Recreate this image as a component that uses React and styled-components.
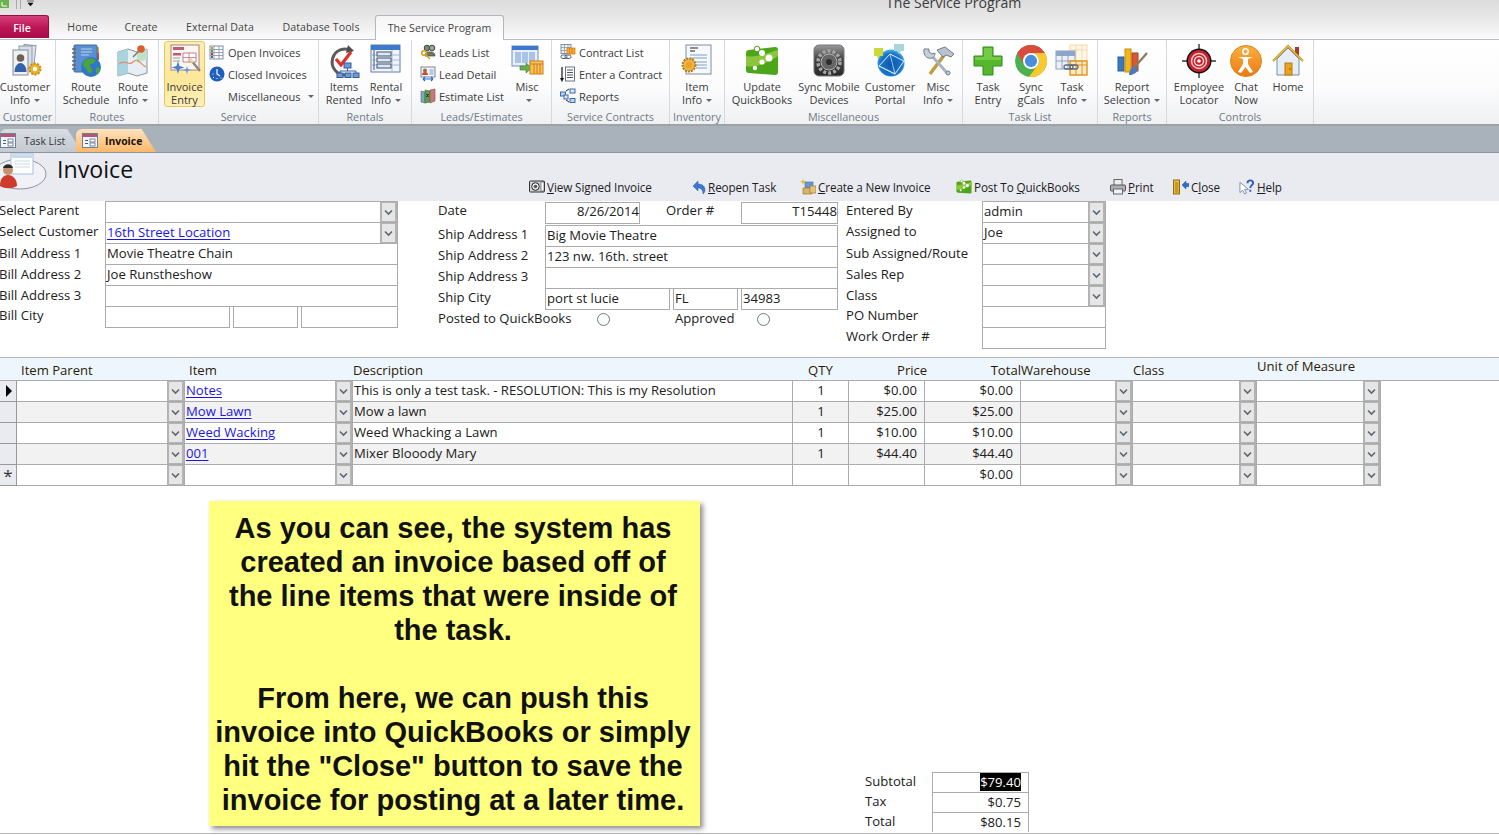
import React from "react";
import styled, { createGlobalStyle } from "styled-components";

const uiFont = `"Open Sans", "Noto Sans", sans-serif`;
const line = "#ababab";

const GlobalStyle = createGlobalStyle`
  html, body {
    margin: 0;
    padding: 0;
    background: #fff;
  }
  body {
    font-family: ${uiFont};
    color: #1c1c1c;
    overflow: hidden;
  }
`;

const Page = styled.div`
  width: 1499px;
  height: 835px;
  overflow: hidden;
  display: flex;
  flex-direction: column;
`;

const Chrome = styled.div`
  height: 40px;
  background: linear-gradient(#dcdcdc, #e6e6e6 40%, #fbfbfb);
  border-bottom: 1px solid #b9bcc2;
  box-sizing: border-box;
  display: flex;
  flex-direction: column;
`;

const TitleBar = styled.div`
  height: 16px;
  display: flex;
  overflow: hidden;
`;

const Quick = styled.div`
  width: 886px;
  flex: none;
  display: flex;
  align-items: flex-start;
  svg {
    display: block;
  }
`;

const Title = styled.div`
  font-size: 14.1px;
  line-height: 16px;
  margin-top: -5px;
  color: #3c3c3c;
  white-space: nowrap;
`;

const Tabs = styled.div`
  display: flex;
  height: 24px;
`;

const FileTab = styled.div`
  width: 49px;
  height: 23px;
  margin-right: 6px;
  padding-right: 4px;
  background: linear-gradient(#d6417a, #bb1454 55%, #a80d48);
  border: 1px solid #9c0b42;
  border-bottom: 0;
  border-left: 0;
  border-radius: 0 3px 0 0;
  box-sizing: border-box;
  color: #fff;
  font-size: 10.5px;
  font-weight: 600;
  line-height: 24px;
  text-align: center;
`;

const Tab = styled.div`
  width: ${({ $w }) => $w}px;
  margin-left: ${({ $ml }) => $ml || 0}px;
  height: ${({ $active }) => ($active ? 25 : 24)}px;
  box-sizing: border-box;
  font-size: 10.6px;
  line-height: 24px;
  color: #444;
  text-align: center;
  white-space: nowrap;
  letter-spacing: 0.1px;
  ${({ $active }) =>
    $active &&
    `background: linear-gradient(#f4f4f4, #ffffff);
     border: 1px solid #b4b7bd;
     border-bottom: 0;
     border-radius: 3px 3px 0 0;
     position: relative;
     z-index: 1;`}
`;

const Ribbon = styled.div`
  height: 86px;
  display: flex;
  background: linear-gradient(#ffffff, #fcfcfd 55%, #eef0f2);
  border-bottom: 2px solid #9ea3a8;
  box-sizing: border-box;
`;

const Group = styled.div`
  width: ${({ $w }) => $w}px;
  flex: none;
  box-sizing: border-box;
  border-right: 1px solid #d5d8dc;
  display: flex;
  flex-direction: column;
`;

const GroupBody = styled.div`
  height: 70px;
  padding-left: ${({ $pl }) => $pl || 0}px;
  display: flex;
`;

const GroupLabel = styled.div`
  text-align: center;
  font-size: 10.8px;
  line-height: 14px;
  color: #6f7a86;
  white-space: nowrap;
`;

const BigButton = styled.div`
  width: ${({ $w }) => $w}px;
  flex: none;
  height: 66px;
  margin-top: 1px;
  box-sizing: border-box;
  display: flex;
  flex-direction: column;
  align-items: center;
  padding-top: 2px;
  font-size: 11px;
  line-height: 13px;
  color: #3b3b3b;
  text-align: center;
  white-space: nowrap;
  border-radius: 3px;
  border: 1px solid transparent;
  ${({ $active }) =>
    $active &&
    `background: linear-gradient(#fdeeb4, #fde79a 60%, #fdf0b8);
     border-color: #e8c558;`}
  svg {
    flex: none;
    display: block;
    margin-bottom: 2px;
  }
`;

const Caret = styled.span`
  display: inline-block;
  width: 0;
  height: 0;
  margin-left: 4px;
  vertical-align: 2px;
  border-left: 3px solid transparent;
  border-right: 3px solid transparent;
  border-top: 3px solid #666;
`;

const SmallList = styled.div`
  width: ${({ $w }) => $w}px;
  flex: none;
  display: flex;
  flex-direction: column;
  padding-top: 1px;
`;

const SmallButton = styled.div`
  height: 22px;
  display: flex;
  align-items: center;
  gap: 3px;
  padding-left: ${({ $pl }) => $pl || 0}px;
  font-size: 11px;
  color: #3b3b3b;
  white-space: nowrap;
  svg {
    flex: none;
  }
`;

const DocStrip = styled.div`
  height: 27px;
  background: #a9b2bb;
  border-bottom: 1px solid #8d949c;
  box-sizing: border-box;
  display: flex;
  align-items: flex-end;
`;

const DocTab = styled.div`
  height: 23px;
  width: ${({ $w }) => $w}px;
  margin-left: ${({ $ml }) => $ml || 0}px;
  box-sizing: border-box;
  display: flex;
  align-items: center;
  gap: ${({ $gap }) => $gap}px;
  padding-left: ${({ $pl }) => $pl}px;
  font-size: 10.4px;
  border-radius: 6px 8px 0 0;
  clip-path: polygon(0 0, 82% 0, 100% 100%, 0 100%);
  background: ${({ $active }) =>
    $active
      ? "linear-gradient(#fde3bf, #fbb869)"
      : "linear-gradient(#d9dde2, #c3c9d0)"};
  font-weight: ${({ $active }) => ($active ? 700 : 400)};
  color: ${({ $active }) => ($active ? "#1c1204" : "#333")};
  svg {
    flex: none;
  }
`;

const FormHeader = styled.div`
  height: 48px;
  background: #e9ebf1;
  display: flex;
`;

const HeaderBadge = styled.div`
  width: 57px;
  flex: none;
  svg {
    display: block;
  }
`;

const HeaderTitle = styled.div`
  width: 472px;
  flex: none;
  font-size: 23.2px;
  line-height: 33px;
  color: #111;
`;

const Commands = styled.div`
  display: flex;
  align-items: flex-start;
  padding-top: 25px;
`;

const Command = styled.div`
  width: ${({ $w }) => $w}px;
  flex: none;
  display: flex;
  align-items: center;
  gap: 2px;
  height: 17px;
  font-size: 11.7px;
  color: #1c1c1c;
  white-space: nowrap;
  letter-spacing: -0.1px;
  svg {
    flex: none;
  }
  u {
    text-underline-offset: 1px;
  }
`;

const Details = styled.div`
  height: 156px;
  display: flex;
  border-bottom: 1px solid #b5b5b5;
  font-size: 13.1px;
`;

const BillColumn = styled.div`
  width: 398px;
  flex: none;
  margin-right: 40px;
`;

const ShipColumn = styled.div`
  width: 400px;
  flex: none;
  margin-right: 8px;
`;

const StaffColumn = styled.div`
  width: 260px;
  flex: none;
`;

const FormRow = styled.div`
  height: ${({ $h }) => $h || 21}px;
  display: flex;
  margin-top: ${({ $mt }) => $mt || 0}px;
`;

const Label = styled.div`
  width: ${({ $w }) => $w}px;
  flex: none;
  margin-left: ${({ $ml }) => $ml || 0}px;
  margin-top: ${({ $dy }) => $dy || 0}px;
  line-height: 19px;
  white-space: nowrap;
  color: #202020;
`;

const Field = styled.div`
  width: ${({ $w }) => $w}px;
  flex: none;
  margin-left: ${({ $ml }) => $ml || 0}px;
  height: 22px;
  box-sizing: border-box;
  border: 1px solid ${line};
  margin-bottom: -1px;
  background: #fff;
  display: flex;
  align-items: flex-start;
  justify-content: space-between;
  padding-left: 1px;
  line-height: 18px;
  white-space: nowrap;
  color: #202020;
`;

const FieldText = styled.span`
  flex: 1;
  text-align: ${({ $right }) => ($right ? "right" : "left")};
  margin-top: ${({ $right }) => ($right ? -1 : 0)}px;
`;

const Link = styled.span`
  color: #1a14e8;
  text-decoration: underline;
  text-underline-offset: 2px;
`;

const ComboButton = styled.div`
  width: 17px;
  align-self: stretch;
  flex: none;
  box-sizing: border-box;
  background: #e6e6e6;
  border: 2px solid #b3b3b3;
  border-top-width: 1px;
  border-bottom-width: 1px;
  display: flex;
  align-items: center;
  justify-content: center;
`;

const RadioRow = styled.div`
  height: 21px;
  display: flex;
  align-items: flex-start;
`;

const Radio = styled.span`
  width: 11px;
  height: 11px;
  flex: none;
  border-radius: 50%;
  border: 1px solid #6d7680;
  margin-left: ${({ $ml }) => $ml}px;
  margin-top: 4px;
`;

const Table = styled.div`
  display: grid;
  grid-template-columns: 17px 168px 168px 440px 56px 76px 96px 112px 124px 124px;
  font-size: 13.1px;
`;

const HeadRow = styled.div`
  grid-column: 1 / -1;
  height: 23px;
  background: #eef6fd;
  border-bottom: 1px solid ${line};
  width: 1499px;
  box-sizing: border-box;
  display: grid;
  grid-template-columns: 21px 168px 164px 455px 89px 92px 32px 112px 124px 124px;
  line-height: 24px;
  color: #2a1a08;
  white-space: nowrap;
`;

const HeadCell = styled.div`
  text-align: ${({ $align }) => $align || "left"};
  margin-top: ${({ $up }) => ($up ? "-4px" : "0")};
  margin-left: ${({ $ml }) => $ml || 0}px;
`;

const Selector = styled.div`
  background: #e9ebf1;
  height: 21px;
  box-sizing: border-box;
  border-bottom: 1px solid #999;
  border-right: 1px solid #999;
  display: flex;
  align-items: center;
  justify-content: ${({ $center }) => ($center ? "center" : "flex-start")};
  padding-left: ${({ $center }) => ($center ? 0 : 6)}px;
  padding-top: ${({ $center }) => ($center ? 1 : 0)}px;
  font-size: 17px;
  color: #333;
`;

const RowArrow = styled.span`
  width: 0;
  height: 0;
  border-top: 6px solid transparent;
  border-bottom: 6px solid transparent;
  border-left: 6px solid #000;
`;

const Cell = styled.div`
  height: 21px;
  box-sizing: border-box;
  background: ${({ $alt }) => ($alt ? "#f2f2f2" : "#fff")};
  border-bottom: 1px solid ${line};
  border-right: 1px solid ${line};
  display: flex;
  align-items: flex-start;
  justify-content: ${({ $justify }) => $justify || "space-between"};
  padding-left: 1px;
  padding-right: ${({ $justify }) => ($justify === "flex-end" ? 7 : 0)}px;
  line-height: 18px;
  white-space: nowrap;
  color: #202020;
`;

const BottomArea = styled.div`
  height: 348px;
  display: flex;
  border-bottom: 1px solid #b5b5b5;
  box-sizing: border-box;
`;

const Note = styled.div`
  width: 491px;
  height: 325px;
  margin: 15px 0 0 209px;
  flex: none;
  box-sizing: border-box;
  padding: 10px 3px 0 0;
  background: #ffff80;
  box-shadow: 3px 3px 5px #8f8f8f;
  font-family: "Liberation Sans", Arial, sans-serif;
  font-weight: 700;
  font-size: 29px;
  line-height: 34px;
  color: #111;
  text-align: center;
  p {
    margin: 0;
  }
`;

const Totals = styled.div`
  margin: 286px 0 0 165px;
  font-size: 13.1px;
`;

const TotalRow = styled.div`
  height: 20px;
  display: flex;
  line-height: 18px;
`;

const TotalLabel = styled.div`
  width: 67px;
  flex: none;
  color: #202020;
`;

const TotalValue = styled.div`
  width: 97px;
  box-sizing: border-box;
  border: 1px solid ${line};
  border-bottom: 0;
  text-align: right;
  padding-right: 7px;
  line-height: 18px;
  color: #202020;
`;

const Selected = styled.span`
  background: #000;
  color: #fff;
`;

// ---- icons ----

const Chevron = () => (
  <svg width="9" height="7" viewBox="0 0 9 7">
    <path d="M1 1.5 L4.5 5 L8 1.5" fill="none" stroke="#5d6670" strokeWidth="1.6" />
  </svg>
);

const QuickIcons = () => (
  <svg width="40" height="12" viewBox="0 0 40 12">
    <rect x="-2" y="-2" width="11" height="10" fill="#6cb14d" />
    <path d="M2 2v4h5" fill="none" stroke="#fff" strokeWidth="1" />
    <path d="M16.5 0v9M20.5 0v9" stroke="#a8a8a8" />
    <path d="M27 1h7M28 3h5l-2.5 3z" fill="#111" stroke="#111" strokeWidth="0.6" />
  </svg>
);

const CustomerIcon = () => (
  <svg width="34" height="34" viewBox="0 0 34 34">
    <rect x="15" y="1" width="12" height="21" fill="#dfe5ee" stroke="#8f99a5" transform="rotate(6 21 11)" />
    <rect x="11" y="2" width="13" height="23" fill="#d7dee8" stroke="#8f99a5" />
    <rect x="5" y="6" width="15" height="25" fill="#eef0f4" stroke="#808b98" />
    <circle cx="12.5" cy="14" r="3.8" fill="#6f5f55" />
    <path d="M6.5 28c0-6 3.5-9 6-9s6 3 6 9z" fill="#3461ab" />
    <circle cx="27" cy="25" r="5.5" fill="#eab52c" stroke="#c88f14" strokeWidth="2" strokeDasharray="2.2 1.2" />
    <circle cx="27" cy="25" r="2.2" fill="#fff" />
  </svg>
);

const RouteScheduleIcon = () => (
  <svg width="34" height="34" viewBox="0 0 34 34">
    <rect x="27" y="3" width="3" height="6" fill="#e0a030" />
    <rect x="27" y="9" width="3" height="7" fill="#c64a3a" />
    <rect x="5" y="1" width="23" height="27" rx="1" fill="#5b8fcf" stroke="#3a6aa8" />
    <path d="M3 5h4M3 9h4M3 13h4M3 17h4M3 21h4M3 25h4" stroke="#666" strokeWidth="1.3" />
    <path d="M12 5h11M12 8h11M12 11h8" stroke="#b8d0ee" strokeWidth="1" />
    <circle cx="22" cy="23" r="10" fill="#2f78c8" />
    <path d="M15 17c3-3 8-3 11-1 1 3-3 4-5 4-1 3 3 4 2 8-3 2-4 1-5-2-1-2-4-3-4-6z" fill="#4ca53a" />
    <path d="M27 24c2-1 3 0 4 1-1 3-3 5-4 5z" fill="#4ca53a" />
  </svg>
);

const RouteInfoIcon = () => (
  <svg width="34" height="34" viewBox="0 0 34 34">
    <path d="M2 8l10-3 9 3 10-3v24l-10 3-9-3-10 3z" fill="#e8eff3" stroke="#7f97a6" />
    <path d="M2 8l10-3v24l-10 3z" fill="#a9d3de" />
    <path d="M21 8l10-3v10l-10 4z" fill="#bfe1c6" />
    <path d="M3 20c6-6 9 3 14-2s7 2 13 5" fill="none" stroke="#e0896a" strokeWidth="1.2" />
    <path d="M17 13l6-6" stroke="#777" strokeWidth="1.4" />
    <circle cx="25" cy="5" r="3.8" fill="#d9602a" />
  </svg>
);

const InvoiceEntryIcon = () => (
  <svg width="34" height="34" viewBox="0 0 34 34">
    <rect x="3" y="1" width="28" height="25" fill="#fbf6f0" stroke="#a08a80" />
    <rect x="5" y="3" width="11" height="3" fill="#c05a7a" />
    <rect x="5" y="9" width="8" height="2.5" fill="#c05a7a" />
    <path d="M15 9h13v9H15z" fill="#fff" stroke="#c05a7a" strokeWidth="0.8" />
    <path d="M15 13.5h13M21 9v9" stroke="#c05a7a" strokeWidth="0.7" />
    <path d="M5 14h7M5 17h7" stroke="#9a9a9a" />
    <path d="M22 15l10 12" stroke="#888" strokeWidth="2.4" />
    <path d="M22 15l3 3.5" stroke="#f4e08a" strokeWidth="2.4" />
    <path d="M10 17l1.5 5 5 1.5-5 1.500-1.500 5-1.500-5-5-1.500 5-1.500z" fill="#4b7fd0" />
    <path d="M19 22l1 3 3 1-3 1-1 3-1-3-3-1 3-1z" fill="#6e9ae0" />
  </svg>
);

const ItemsRentedIcon = () => (
  <svg width="34" height="34" viewBox="0 0 34 34">
    <path d="M25 7a13 13 0 1 0-6 24" fill="none" stroke="#5a5a5a" strokeWidth="3" />
    <path d="M21 1l6 6-8 2z" fill="#4d4d4d" />
    <path d="M9 15l5 6 10-13" fill="none" stroke="#e0302a" strokeWidth="3.2" />
    <rect x="17" y="19" width="7" height="5" fill="#6f98d6" stroke="#345d9c" />
    <path d="M20.5 24v3M13 27h16M13 27v2M29 27v2" stroke="#345d9c" fill="none" />
    <rect x="10" y="29" width="6" height="4.5" fill="#6f98d6" stroke="#345d9c" />
    <rect x="18" y="29" width="6" height="4.5" fill="#6f98d6" stroke="#345d9c" />
    <rect x="26" y="29" width="6" height="4.5" fill="#6f98d6" stroke="#345d9c" />
  </svg>
);

const RentalInfoIcon = () => (
  <svg width="34" height="34" viewBox="0 0 34 34">
    <rect x="2" y="1" width="29" height="27" fill="#f1f5fb" stroke="#5e7fae" />
    <rect x="2" y="1" width="29" height="5" fill="#3f79cc" />
    <path d="M23 6v22M2 11h29M2 16h29M2 21h29" stroke="#a3b8d6" />
    <rect x="8" y="8" width="14" height="4" fill="#dfe7f2" stroke="#3c5272" />
    <rect x="8" y="14" width="14" height="4" fill="#dfe7f2" stroke="#3c5272" />
    <rect x="8" y="20" width="14" height="4" fill="#dfe7f2" stroke="#3c5272" />
    <path d="M5 6v20" stroke="#3c5272" />
  </svg>
);

const MiscIcon = () => (
  <svg width="34" height="34" viewBox="0 0 34 34">
    <rect x="2" y="2" width="26" height="20" fill="#e9f0fb" stroke="#6d8fc4" />
    <rect x="2" y="2" width="26" height="4" fill="#3d77cf" />
    <rect x="5" y="8" width="6" height="11" fill="#a9c2e8" />
    <rect x="12" y="8" width="6" height="11" fill="#a9c2e8" />
    <rect x="19" y="8" width="6" height="11" fill="#a9c2e8" />
    <path d="M10 22h6v-3l6 5-6 5v-3h-6z" fill="#6bae4a" stroke="#3f7e2c" strokeWidth="0.6" />
    <rect x="20" y="17" width="13" height="13" fill="#f8c25c" stroke="#d17c12" />
    <path d="M24 20v10M27 20v10M30 20v10M20 20h13" stroke="#d17c12" />
  </svg>
);

const ItemInfoIcon = () => (
  <svg width="34" height="34" viewBox="0 0 34 34">
    <rect x="6" y="1" width="25" height="29" fill="#f6f8fb" stroke="#7c8ea6" />
    <path d="M10 4h8M10 7h5" stroke="#222" strokeWidth="1.2" />
    <path d="M10 11h17M10 14h17M16 18h11M16 21h11M16 24h11" stroke="#7d9cc6" />
    <circle cx="9" cy="21" r="6.5" fill="#efb44a" stroke="#b07a1b" strokeDasharray="2 1" strokeWidth="2" />
    <circle cx="9" cy="21" r="3.5" fill="#e8a52c" />
  </svg>
);

const QuickBooksIcon = ({ size = 34 }) => (
  <svg width={size} height={size} viewBox="0 0 34 34">
    <path d="M4 6l26-3c2 0 3 1 3 3v22c0 2-1 3-3 3l-26-2c-2 0-3-1-3-3V9c0-2 1-3 3-3z" fill="#4da61a" />
    <path d="M1 12c10 2 18-2 32-6v6C20 20 10 24 1 22z" fill="#8cc63e" />
    <circle cx="12" cy="5" r="2.8" fill="#fff" stroke="#5a9c20" />
    <circle cx="17" cy="9" r="3" fill="#fff" />
    <circle cx="24" cy="14" r="3.5" fill="#fff" />
    <circle cx="17" cy="18" r="2.6" fill="#fff" />
    <circle cx="10" cy="24" r="2.2" fill="#fff" />
  </svg>
);

const SyncIcon = () => (
  <svg width="34" height="34" viewBox="0 0 34 34">
    <defs>
      <linearGradient id="syncFill" x1="0" y1="0" x2="0" y2="1">
        <stop offset="0" stopColor="#9a9a9a" />
        <stop offset="0.45" stopColor="#444" />
        <stop offset="1" stopColor="#2a2a2a" />
      </linearGradient>
    </defs>
    <rect x="2" y="1" width="30" height="31" rx="5" fill="url(#syncFill)" stroke="#777" />
    <circle cx="17" cy="18" r="11" fill="none" stroke="#a5a5a5" strokeWidth="3.5" strokeDasharray="3 2" />
    <circle cx="17" cy="18" r="8" fill="#666" stroke="#b5b5b5" />
    <circle cx="17" cy="18" r="3" fill="#2d2d2d" />
  </svg>
);

const PortalIcon = () => (
  <svg width="34" height="34" viewBox="0 0 34 34">
    <defs>
      <radialGradient id="portalFill" cx="0.5" cy="0.55" r="0.55">
        <stop offset="0" stopColor="#0b57ad" />
        <stop offset="0.75" stopColor="#1a74cc" />
        <stop offset="1" stopColor="#49b6ea" />
      </radialGradient>
    </defs>
    <circle cx="18" cy="19" r="13.5" fill="url(#portalFill)" />
    <path d="M6 22l11-12 14 7-9 13z" fill="none" stroke="#dcefff" strokeWidth="1" />
    <path d="M6 22l16 8M17 10l5 20" stroke="#dcefff" strokeWidth="0.7" />
    <path d="M1 4h9v8H7l-2 3-1-3H1z" fill="#cdd83a" />
    <path d="M21 0h10v7h-3l-2 3-2-3h-3z" fill="#a9d5dc" />
  </svg>
);

const ToolsIcon = () => (
  <svg width="34" height="34" viewBox="0 0 34 34">
    <path d="M9 30L24 10" stroke="#c49a3a" strokeWidth="3.4" />
    <path d="M16 6l8-3 9 7-3 3-5-2-3 2z" fill="#b9c3cf" stroke="#6e7c8c" />
    <path d="M27 30L10 11" stroke="#a8b4c2" strokeWidth="3" />
    <path d="M3 5l5 0 0 3 3 2 3-1c0 4-3 6-6 5-3 0-6-4-5-9z" fill="#c6d0dc" stroke="#6e7c8c" />
    <circle cx="27" cy="29" r="2" fill="#c6d0dc" stroke="#6e7c8c" />
  </svg>
);

const PlusIcon = () => (
  <svg width="34" height="34" viewBox="0 0 34 34">
    <path d="M12 3h10v9h9v10h-9v9H12v-9H3V12h9z" fill="#55b82c" stroke="#2f8a18" strokeWidth="1" />
    <path d="M13 4h8v9h9v3H4v-3h9z" fill="#8ad65c" opacity="0.6" />
  </svg>
);

const ChromeIcon = () => (
  <svg width="34" height="34" viewBox="0 0 32 32">
    <circle cx="16" cy="16" r="15" fill="#4caf50" />
    <path d="M3 8.5A15 15 0 0 1 29 8.5H16a7.5 7.5 0 0 0-6.5 11z" fill="#dc4a3e" />
    <path d="M29 8.5A15 15 0 0 1 14 30.9L22.5 20a7.5 7.5 0 0 0-6.5-11.5z" fill="#fbc82e" />
    <circle cx="16" cy="16" r="7.5" fill="#fff" />
    <circle cx="16" cy="16" r="5.8" fill="#4a8ddc" />
  </svg>
);

const TaskInfoIcon = () => (
  <svg width="34" height="34" viewBox="0 0 34 34">
    <g stroke="#f5d9a8" fill="#fff7e8">
      <rect x="15" y="1" width="17" height="16" />
      <path d="M21 1v16M27 1v16M15 6h17" fill="none" />
    </g>
    <rect x="1" y="7" width="19" height="18" fill="#edf1f7" stroke="#8ca0bc" />
    <rect x="1" y="7" width="19" height="5" fill="#8ca6cc" />
    <path d="M7 7v18M13 7v18M1 17h19" stroke="#8ca0bc" />
    <rect x="15" y="17" width="17" height="14" fill="#fcebc7" stroke="#e58f12" strokeWidth="1.4" />
    <path d="M21 17v14M27 17v14M15 21h17" stroke="#e58f12" />
    <rect x="9" y="21" width="9" height="4" rx="2" fill="none" stroke="#5a6b80" strokeWidth="1.3" />
    <rect x="15" y="21" width="8" height="4" rx="2" fill="none" stroke="#5a6b80" strokeWidth="1.3" />
  </svg>
);

const ReportIcon = () => (
  <svg width="34" height="34" viewBox="0 0 34 34">
    <rect x="3" y="13" width="6" height="14" fill="#3a78c4" stroke="#285a98" />
    <rect x="10" y="5" width="6" height="23" fill="#f3b618" stroke="#c78e0a" />
    <rect x="17" y="9" width="6" height="18" fill="#d85a34" stroke="#a8401f" />
    <path d="M32 9L18 25" stroke="#8c7a5c" strokeWidth="2.2" />
    <path d="M20 22c-4 1-6 5-6 9 4 0 8-2 9-6z" fill="#4f79b8" />
  </svg>
);

const TargetIcon = () => (
  <svg width="34" height="34" viewBox="0 0 34 34">
    <path d="M17 0v34M0 17h34" stroke="#333" strokeWidth="1.4" />
    <circle cx="17" cy="17" r="12.5" fill="#111" />
    <circle cx="17" cy="17" r="11" fill="#c8202c" />
    <circle cx="17" cy="17" r="7.5" fill="none" stroke="#f3c4c6" strokeWidth="1.6" />
    <circle cx="17" cy="17" r="4.5" fill="none" stroke="#f3dcdc" strokeWidth="1.4" />
    <circle cx="17" cy="17" r="1.8" fill="#fff" />
  </svg>
);

const ChatIcon = () => (
  <svg width="34" height="34" viewBox="0 0 34 34">
    <defs>
      <linearGradient id="chatFill" x1="0" y1="0" x2="0" y2="1">
        <stop offset="0" stopColor="#fbb040" />
        <stop offset="1" stopColor="#ec7a12" />
      </linearGradient>
    </defs>
    <circle cx="17" cy="17" r="15.5" fill="url(#chatFill)" stroke="#d8861e" />
    <circle cx="16.5" cy="7.5" r="2.7" fill="none" stroke="#fff" strokeWidth="1.6" />
    <path d="M9 13h15l-5 2v5l5 8-3 1-4.5-6-4.5 6-3-1 5-8v-5z" fill="#fff" />
  </svg>
);

const HomeIcon = () => (
  <svg width="34" height="34" viewBox="0 0 34 34">
    <rect x="24" y="3" width="4" height="9" fill="#a8392f" />
    <path d="M6 15l11-11 11 11v16H6z" fill="#e6edf6" stroke="#7d8fa8" />
    <path d="M2 17L17 2l15 15" fill="none" stroke="#c9951f" strokeWidth="2.2" />
    <path d="M2 17L17 2l15 15" fill="none" stroke="#f0cc66" strokeWidth="0.8" />
    <rect x="14" y="19" width="7" height="12" fill="#eca31a" stroke="#b67a0e" />
    <circle cx="19" cy="25" r="0.8" fill="#7a4d00" />
  </svg>
);

const OpenInvoicesIcon = () => (
  <svg width="16" height="15" viewBox="0 0 16 15">
    <rect x="1" y="1" width="13" height="13" fill="#fff" stroke="#7f8fa6" />
    <path d="M5 1v13M10 1v13M1 4.5h13M1 7.5h13M1 10.5h13" stroke="#7f8fa6" strokeWidth="0.8" />
    <rect x="2" y="2" width="2" height="2" fill="#d0a020" />
    <rect x="2" y="5" width="2" height="2" fill="#5da33c" />
    <rect x="2" y="8" width="2" height="2" fill="#c0392b" />
    <rect x="2" y="11" width="2" height="2" fill="#3a70c0" />
  </svg>
);

const ClosedInvoicesIcon = () => (
  <svg width="16" height="16" viewBox="0 0 16 16">
    <circle cx="8" cy="8" r="7.5" fill="#1f5fc0" />
    <path d="M8 3v5l3 2" stroke="#fff" strokeWidth="1.2" fill="none" />
    <path d="M3.5 8h1M11.5 12h1M4 11.5h1M8 12v1" stroke="#fff" />
  </svg>
);

const LeadsIcon = () => (
  <svg width="16" height="16" viewBox="0 0 16 16">
    <circle cx="7" cy="4" r="2.8" fill="#7e8c78" stroke="#3c463a" />
    <circle cx="12" cy="4" r="2.8" fill="#9aa596" stroke="#3c463a" />
    <path d="M5 12c0-3 2-4 3-4h3c2 0 4 1 4 4z" fill="#6d7a68" stroke="#3c463a" strokeWidth="0.7" />
    <circle cx="4" cy="9" r="2.3" fill="none" stroke="#d9a21e" strokeWidth="1.5" />
    <path d="M5.5 10.5L10 15" stroke="#d9a21e" strokeWidth="1.5" />
  </svg>
);

const LeadDetailIcon = () => (
  <svg width="16" height="16" viewBox="0 0 16 16">
    <rect x="1" y="1" width="14" height="10" fill="#f3f5f8" stroke="#7c8696" />
    <circle cx="5" cy="4.5" r="2" fill="#b0603a" />
    <path d="M2 9c0-2 1-3 3-3s3 1 3 3z" fill="#c44a3a" />
    <path d="M9.5 4h4M9.5 6h4M9.5 8h4" stroke="#7d9cc6" />
    <path d="M3 13h10M3 13l2-2M3 13l2 2M13 13l-2-2M13 13l-2 2" stroke="#2c6fc6" strokeWidth="1.2" fill="none" />
  </svg>
);

const EstimateIcon = () => (
  <svg width="16" height="16" viewBox="0 0 16 16">
    <path d="M1 3l4 1v11l-4-1z" fill="#7fa8c4" stroke="#546a7c" strokeWidth="0.6" />
    <path d="M5 2l5 1v11l-5 1z" fill="#5da04a" stroke="#3e6c34" strokeWidth="0.6" />
    <path d="M10 2l5-1v12l-5 2z" fill="#c77a7a" stroke="#8c4a4a" strokeWidth="0.6" />
    <path d="M6.5 6l2 3M8.5 6l-2 3" stroke="#223" />
  </svg>
);

const ContractListIcon = () => (
  <svg width="16" height="16" viewBox="0 0 16 16">
    <rect x="1" y="0.5" width="10" height="9" fill="#eef2f7" stroke="#7f8fa6" />
    <path d="M4.5 0.5v9M8 0.5v9M1 3.5h10M1 6.5h10" stroke="#7f8fa6" strokeWidth="0.7" />
    <rect x="7" y="4" width="8" height="6" fill="#f7a930" stroke="#c97a10" strokeWidth="0.7" />
    <path d="M9.5 4v6M12 4v6" stroke="#c97a10" strokeWidth="0.6" />
    <rect x="1" y="11" width="6" height="3.5" rx="1.7" fill="none" stroke="#4a5a70" />
    <rect x="5" y="11" width="6" height="3.5" rx="1.7" fill="none" stroke="#4a5a70" />
  </svg>
);

const EnterContractIcon = () => (
  <svg width="16" height="17" viewBox="0 0 16 17">
    <path d="M2 1v12" stroke="#111" strokeWidth="1.2" />
    <path d="M0 12h4l-2 4z" fill="#111" />
    <rect x="5.5" y="1" width="9" height="14" fill="#fff" stroke="#6a7482" />
    <path d="M7 4h6M7 6.5h6M7 9h6M7 11.5h6" stroke="#4a5462" />
  </svg>
);

const ReportsSmallIcon = () => (
  <svg width="16" height="16" viewBox="0 0 16 16">
    <rect x="0.5" y="4" width="5" height="4" fill="#bcd2ee" stroke="#3a6ab0" />
    <rect x="4" y="7" width="4" height="4" fill="#dfe9f7" stroke="#3a6ab0" />
    <rect x="10" y="1" width="5" height="4" fill="#dfe9f7" stroke="#3a6ab0" />
    <rect x="10" y="10.5" width="5" height="4" fill="#bcd2ee" stroke="#3a6ab0" />
    <path d="M6 3l3-2M6 12l3 2" stroke="#222" />
  </svg>
);

const CameraIcon = () => (
  <svg width="16" height="13" viewBox="0 0 16 13">
    <rect x="0.5" y="1" width="15" height="11" rx="1" fill="#cfd2d6" stroke="#333" />
    <rect x="12" y="2" width="3" height="9" fill="#fff" stroke="#444" strokeWidth="0.6" />
    <circle cx="6.5" cy="6.5" r="3.8" fill="#eee" stroke="#222" />
    <circle cx="6.5" cy="6.5" r="1.8" fill="#555" />
  </svg>
);

const ReopenIcon = () => (
  <svg width="14" height="14" viewBox="0 0 14 14">
    <path d="M1 6l5-5v3c4 0 7 2 7 6 0 2-1 3-2 4 0-4-2-6-5-6v3z" fill="#3f78d0" stroke="#2a5aa8" strokeWidth="0.5" />
  </svg>
);

const CreateIcon = () => (
  <svg width="16" height="16" viewBox="0 0 16 16">
    <path d="M3 0l1 2 2 .5-2 1L3 6 2 3.5l-2-1 2-.5z" fill="#e8c22a" />
    <rect x="5" y="3" width="8" height="6" fill="#6f96d4" stroke="#456aa8" strokeWidth="0.6" />
    <path d="M3 9h9v6H3z" fill="#d9b366" stroke="#9c7c34" strokeWidth="0.7" />
    <path d="M10 7h6v7h-6z" fill="#e3c47e" stroke="#9c7c34" strokeWidth="0.7" />
  </svg>
);

const PrintIcon = () => (
  <svg width="16" height="16" viewBox="0 0 16 16">
    <rect x="4" y="0.5" width="8" height="6" fill="#eee" stroke="#666" />
    <rect x="0.5" y="6" width="15" height="6" rx="1" fill="#aab0b8" stroke="#555" />
    <rect x="3.5" y="10" width="9" height="5" fill="#f4f4f4" stroke="#666" />
  </svg>
);

const CloseIcon = () => (
  <svg width="16" height="16" viewBox="0 0 16 16">
    <rect x="0.5" y="1" width="6" height="14" fill="#f0c23a" stroke="#8a6d16" />
    <path d="M2 2.5l3.5 1v11l-3.5-1z" fill="#c9982a" />
    <path d="M9 6l4-4v2.5h3v3h-3v2.5z" fill="#2f6fd0" stroke="#1f4f9c" strokeWidth="0.5" />
  </svg>
);

const HelpIcon = () => (
  <svg width="16" height="16" viewBox="0 0 17 16">
    <path d="M1 3l0 11 3-2.5 2 4 2-1-2-4h4z" fill="#fff" stroke="#7a8ea8" />
    <path d="M9 4c0-4 6-4 6 0 0 2-3 2-3 5M12 11v2" fill="none" stroke="#2f5fb8" strokeWidth="2" />
  </svg>
);

const FormTabIcon = () => (
  <svg width="16" height="15" viewBox="0 0 16 15">
    <rect x="0.5" y="0.5" width="15" height="14" fill="#f4f6fa" stroke="#6d7f9a" />
    <rect x="1" y="1" width="14" height="3" fill="#b5557a" />
    <path d="M3 7.5h3M3 10.5h3" stroke="#4a5d78" />
    <rect x="8" y="6" width="5" height="3" fill="#fff" stroke="#4a5d78" strokeWidth="0.7" />
    <rect x="8" y="10" width="5" height="3" fill="#fff" stroke="#4a5d78" strokeWidth="0.7" />
  </svg>
);

const InvoiceBadge = () => (
  <svg width="48" height="38" viewBox="0 0 48 38">
    <ellipse cx="20" cy="21" rx="26" ry="15" fill="#f1f2f6" stroke="#8c929c" />
    <rect x="11" y="1" width="22" height="20" fill="#fff" stroke="#a9c0dc" />
    <rect x="12" y="2" width="20" height="3" fill="#c6d9ef" />
    <path d="M15 8h15M15 11h15M15 14h15" stroke="#cfd9e6" />
    <circle cx="8" cy="17" r="5" fill="#c79272" />
    <path d="M3 15c1-5 9-5 10 0z" fill="#2a2a2a" />
    <path d="M0 33c0-7 3-11 8-11s9 4 9 11c-5 3-12 3-17 0z" fill="#d03a2c" />
  </svg>
);

// ---- pieces ----

const BigBtn = ({ Icon, first, second, caret, w, active }) => (
  <BigButton $w={w} $active={active}>
    <Icon />
    <span>{first}</span>
    <span>
      {second}
      {caret && <Caret />}
    </span>
  </BigButton>
);

const invoiceRows = [
  { item: "Notes", desc: "This is only a test task. - RESOLUTION: This is my Resolution", qty: "1", price: "$0.00", total: "$0.00" },
  { item: "Mow Lawn", desc: "Mow a lawn", qty: "1", price: "$25.00", total: "$25.00" },
  { item: "Weed Wacking", desc: "Weed Whacking a Lawn", qty: "1", price: "$10.00", total: "$10.00" },
  { item: "001", desc: "Mixer Blooody Mary", qty: "1", price: "$44.40", total: "$44.40" },
  { item: "", desc: "", qty: "", price: "", total: "$0.00", isNew: true },
];

const Combo = ({ w, ml, children }) => (
  <Field $w={w} $ml={ml}>
    <FieldText>{children}</FieldText>
    <ComboButton>
      <Chevron />
    </ComboButton>
  </Field>
);

const ComboCell = ({ alt, children }) => (
  <Cell $alt={alt}>
    <span>{children}</span>
    <ComboButton>
      <Chevron />
    </ComboButton>
  </Cell>
);

export default function App() {
  return (
    <Page>
      <GlobalStyle />
      <Chrome>
        <TitleBar>
          <Quick>
            <QuickIcons />
          </Quick>
          <Title>The Service Program</Title>
        </TitleBar>
        <Tabs>
          <FileTab>File</FileTab>
          <Tab $w={55}>Home</Tab>
          <Tab $w={58} $ml={2}>Create</Tab>
          <Tab $w={96} $ml={2}>External Data</Tab>
          <Tab $w={104} $ml={1}>Database Tools</Tab>
          <Tab $w={129} $ml={2} $active>The Service Program</Tab>
        </Tabs>
      </Chrome>

      <Ribbon>
        <Group $w={56}>
          <GroupBody>
            <BigBtn Icon={CustomerIcon} first="Customer" second="Info" caret w={50} />
          </GroupBody>
          <GroupLabel>Customer</GroupLabel>
        </Group>
        <Group $w={103}>
          <GroupBody $pl={4}>
            <BigBtn Icon={RouteScheduleIcon} first="Route" second="Schedule" w={52} />
            <BigBtn Icon={RouteInfoIcon} first="Route" second="Info" caret w={42} />
          </GroupBody>
          <GroupLabel>Routes</GroupLabel>
        </Group>
        <Group $w={160}>
          <GroupBody $pl={5}>
            <BigBtn Icon={InvoiceEntryIcon} first="Invoice" second="Entry" w={41} active />
            <SmallList $w={110}>
              <SmallButton $pl={4}><OpenInvoicesIcon />Open Invoices</SmallButton>
              <SmallButton $pl={4}><ClosedInvoicesIcon />Closed Invoices</SmallButton>
              <SmallButton $pl={23}>Miscellaneous<Caret /></SmallButton>
            </SmallList>
          </GroupBody>
          <GroupLabel>Service</GroupLabel>
        </Group>
        <Group $w={93}>
          <GroupBody $pl={3}>
            <BigBtn Icon={ItemsRentedIcon} first="Items" second="Rented" w={44} />
            <BigBtn Icon={RentalInfoIcon} first="Rental" second="Info" caret w={40} />
          </GroupBody>
          <GroupLabel>Rentals</GroupLabel>
        </Group>
        <Group $w={140}>
          <GroupBody $pl={8}>
            <SmallList $w={88}>
              <SmallButton><LeadsIcon />Leads List</SmallButton>
              <SmallButton><LeadDetailIcon />Lead Detail</SmallButton>
              <SmallButton><EstimateIcon />Estimate List</SmallButton>
            </SmallList>
            <BigBtn Icon={MiscIcon} first="Misc" second="" caret w={38} />
          </GroupBody>
          <GroupLabel>Leads/Estimates</GroupLabel>
        </Group>
        <Group $w={118}>
          <GroupBody $pl={8}>
            <SmallList $w={106}>
              <SmallButton><ContractListIcon />Contract List</SmallButton>
              <SmallButton><EnterContractIcon />Enter a Contract</SmallButton>
              <SmallButton><ReportsSmallIcon />Reports</SmallButton>
            </SmallList>
          </GroupBody>
          <GroupLabel>Service Contracts</GroupLabel>
        </Group>
        <Group $w={55}>
          <GroupBody>
            <BigBtn Icon={ItemInfoIcon} first="Item" second="Info" caret w={54} />
          </GroupBody>
          <GroupLabel>Inventory</GroupLabel>
        </Group>
        <Group $w={238}>
          <GroupBody $pl={5}>
            <BigBtn Icon={QuickBooksIcon} first="Update" second="QuickBooks" w={64} />
            <BigBtn Icon={SyncIcon} first="Sync Mobile" second="Devices" w={70} />
            <BigBtn Icon={PortalIcon} first="Customer" second="Portal" w={52} />
            <BigBtn Icon={ToolsIcon} first="Misc" second="Info" caret w={44} />
          </GroupBody>
          <GroupLabel>Miscellaneous</GroupLabel>
        </Group>
        <Group $w={135}>
          <GroupBody $pl={5}>
            <BigBtn Icon={PlusIcon} first="Task" second="Entry" w={40} />
            <BigBtn Icon={ChromeIcon} first="Sync" second="gCals" w={46} />
            <BigBtn Icon={TaskInfoIcon} first="Task" second="Info" caret w={36} />
          </GroupBody>
          <GroupLabel>Task List</GroupLabel>
        </Group>
        <Group $w={69}>
          <GroupBody>
            <BigBtn Icon={ReportIcon} first="Report" second="Selection" caret w={68} />
          </GroupBody>
          <GroupLabel>Reports</GroupLabel>
        </Group>
        <Group $w={147}>
          <GroupBody $pl={3}>
            <BigBtn Icon={TargetIcon} first="Employee" second="Locator" w={58} />
            <BigBtn Icon={ChatIcon} first="Chat" second="Now" w={36} />
            <BigBtn Icon={HomeIcon} first="Home" second="" w={48} />
          </GroupBody>
          <GroupLabel>Controls</GroupLabel>
        </Group>
      </Ribbon>

      <DocStrip>
        <DocTab $w={82} $pl={0} $gap={8}><FormTabIcon />Task List</DocTab>
        <DocTab $w={80} $ml={-6} $pl={6} $gap={7} $active><FormTabIcon />Invoice</DocTab>
      </DocStrip>

      <FormHeader>
        <HeaderBadge><InvoiceBadge /></HeaderBadge>
        <HeaderTitle>Invoice</HeaderTitle>
        <Commands>
          <Command $w={163}><CameraIcon /><span><u>V</u>iew Signed Invoice</span></Command>
          <Command $w={108}><ReopenIcon /><span><u>R</u>eopen Task</span></Command>
          <Command $w={156}><CreateIcon /><span><u>C</u>reate a New Invoice</span></Command>
          <Command $w={154}><QuickBooksIcon size={16} /><span>Post To <u>Q</u>uickBooks</span></Command>
          <Command $w={63}><PrintIcon /><span><u>P</u>rint</span></Command>
          <Command $w={66}><CloseIcon /><span>C<u>l</u>ose</span></Command>
          <Command $w={60}><HelpIcon /><span><u>H</u>elp</span></Command>
        </Commands>
      </FormHeader>

      <Details>
        <BillColumn>
          <FormRow>
            <Label $w={106} $ml={-1}>Select Parent</Label>
            <Combo w={293} />
          </FormRow>
          <FormRow>
            <Label $w={106} $ml={-1}>Select Customer</Label>
            <Combo w={293}><Link>16th Street Location</Link></Combo>
          </FormRow>
          <FormRow>
            <Label $w={106} $ml={-1} $dy={1}>Bill Address 1</Label>
            <Field $w={293}>Movie Theatre Chain</Field>
          </FormRow>
          <FormRow>
            <Label $w={106} $ml={-1} $dy={1}>Bill Address 2</Label>
            <Field $w={293}>Joe Runstheshow</Field>
          </FormRow>
          <FormRow>
            <Label $w={106} $ml={-1} $dy={1}>Bill Address 3</Label>
            <Field $w={293} />
          </FormRow>
          <FormRow>
            <Label $w={106} $ml={-1}>Bill City</Label>
            <Field $w={125} />
            <Field $w={65} $ml={3} />
            <Field $w={97} $ml={3} />
          </FormRow>
        </BillColumn>

        <ShipColumn>
          <FormRow $mt={1} $h={23}>
            <Label $w={107} $dy={-1}>Date</Label>
            <Field $w={95}><FieldText $right>8/26/2014</FieldText></Field>
            <Label $w={75} $ml={26} $dy={-1}>Order #</Label>
            <Field $w={97}><FieldText $right>T15448</FieldText></Field>
          </FormRow>
          <FormRow>
            <Label $w={107}>Ship Address 1</Label>
            <Field $w={293}>Big Movie Theatre</Field>
          </FormRow>
          <FormRow>
            <Label $w={107}>Ship Address 2</Label>
            <Field $w={293}>123 nw. 16th. street</Field>
          </FormRow>
          <FormRow>
            <Label $w={107}>Ship Address 3</Label>
            <Field $w={293} />
          </FormRow>
          <FormRow>
            <Label $w={107}>Ship City</Label>
            <Field $w={125}>port st lucie</Field>
            <Field $w={65} $ml={3}>FL</Field>
            <Field $w={97} $ml={3}>34983</Field>
          </FormRow>
          <RadioRow>
            <Label $w={159}>Posted to QuickBooks</Label>
            <Radio $ml={0} />
            <Label $w={70} $ml={65}>Approved</Label>
            <Radio $ml={12} />
          </RadioRow>
        </ShipColumn>

        <StaffColumn>
          <FormRow>
            <Label $w={136}>Entered By</Label>
            <Combo w={124}>admin</Combo>
          </FormRow>
          <FormRow>
            <Label $w={136}>Assigned to</Label>
            <Combo w={124}>Joe</Combo>
          </FormRow>
          <FormRow>
            <Label $w={136} $dy={1}>Sub Assigned/Route</Label>
            <Combo w={124} />
          </FormRow>
          <FormRow>
            <Label $w={136} $dy={1}>Sales Rep</Label>
            <Combo w={124} />
          </FormRow>
          <FormRow>
            <Label $w={136} $dy={1}>Class</Label>
            <Combo w={124} />
          </FormRow>
          <FormRow>
            <Label $w={136}>PO Number</Label>
            <Field $w={124} />
          </FormRow>
          <FormRow>
            <Label $w={136}>Work Order #</Label>
            <Field $w={124} />
          </FormRow>
        </StaffColumn>
      </Details>

      <Table>
        <HeadRow>
          <span />
          <HeadCell>Item Parent</HeadCell>
          <HeadCell>Item</HeadCell>
          <HeadCell>Description</HeadCell>
          <HeadCell>QTY</HeadCell>
          <HeadCell>Price</HeadCell>
          <HeadCell $align="right" $ml={-32}>Total</HeadCell>
          <HeadCell>Warehouse</HeadCell>
          <HeadCell>Class</HeadCell>
          <HeadCell $up>Unit of Measure</HeadCell>
        </HeadRow>
        {invoiceRows.map((row, i) => {
          const alt = i % 2 === 1;
          return (
            <React.Fragment key={i}>
              <Selector $center={row.isNew}>
                {i === 0 && <RowArrow />}
                {row.isNew && "*"}
              </Selector>
              <ComboCell alt={alt} />
              <ComboCell alt={alt}>{row.item && <Link>{row.item}</Link>}</ComboCell>
              <Cell $alt={alt}>{row.desc}</Cell>
              <Cell $alt={alt} $justify="center">{row.qty}</Cell>
              <Cell $alt={alt} $justify="flex-end">{row.price}</Cell>
              <Cell $alt={alt} $justify="flex-end">{row.total}</Cell>
              <ComboCell alt={alt} />
              <ComboCell alt={alt} />
              <ComboCell alt={alt} />
            </React.Fragment>
          );
        })}
      </Table>

      <BottomArea>
        <Note>
          <p>As you can see, the system has</p>
          <p>created an invoice based off of</p>
          <p>the line items that were inside of</p>
          <p>the task.</p>
          <p>&nbsp;</p>
          <p>From here, we can push this</p>
          <p>invoice into QuickBooks or simply</p>
          <p>hit the "Close" button to save the</p>
          <p>invoice for posting at a later time.</p>
        </Note>
        <Totals>
          <TotalRow>
            <TotalLabel>Subtotal</TotalLabel>
            <TotalValue><Selected>$79.40</Selected></TotalValue>
          </TotalRow>
          <TotalRow>
            <TotalLabel>Tax</TotalLabel>
            <TotalValue>$0.75</TotalValue>
          </TotalRow>
          <TotalRow>
            <TotalLabel>Total</TotalLabel>
            <TotalValue>$80.15</TotalValue>
          </TotalRow>
        </Totals>
      </BottomArea>
    </Page>
  );
}
